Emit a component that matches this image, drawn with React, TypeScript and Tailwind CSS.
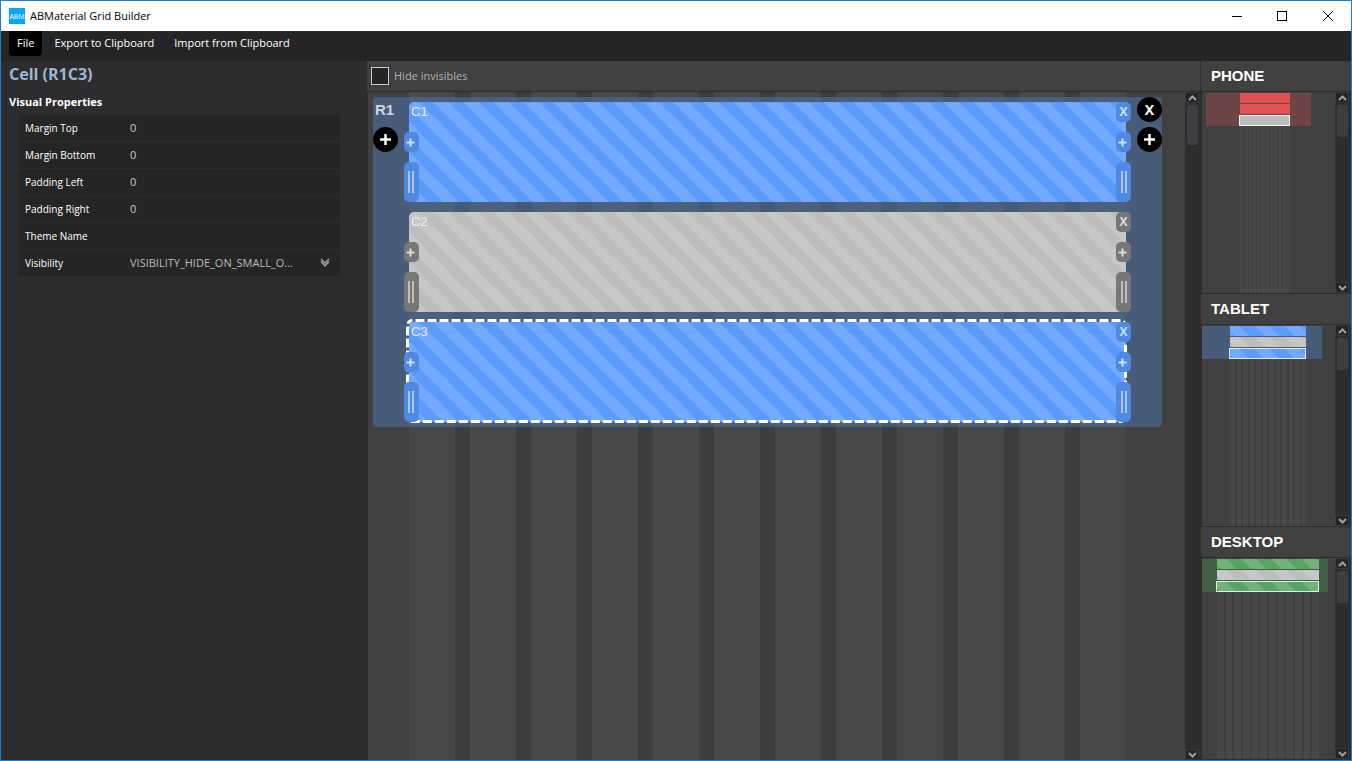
// App.tsx
import React, { useState } from 'react';
import clsx from 'clsx';

type Tone = 'blue' | 'gray';

interface CellData {
  name: string;
  tone: Tone;
  selected?: boolean;
}

const CELLS: CellData[] = [
  { name: 'C1', tone: 'blue' },
  { name: 'C2', tone: 'gray' },
  { name: 'C3', tone: 'blue', selected: true },
];

const PROPERTIES = [
  { id: 'marginTop', label: 'Margin Top', value: '0' },
  { id: 'marginBottom', label: 'Margin Bottom', value: '0' },
  { id: 'paddingLeft', label: 'Padding Left', value: '0' },
  { id: 'paddingRight', label: 'Padding Right', value: '0' },
  { id: 'themeName', label: 'Theme Name', value: '' },
];

const STRIPES =
  'bg-[linear-gradient(45deg,rgba(255,255,255,0.15)_25%,transparent_25%,transparent_50%,rgba(255,255,255,0.15)_50%,rgba(255,255,255,0.15)_75%,transparent_75%)] bg-[length:30px_30px] bg-[position:-5px_0px]';

const ARIAL = "font-['Liberation_Sans',Arial,sans-serif]";

function TitleBar() {
  return (
    <header className="flex h-[30px] shrink-0 items-center bg-white pl-2 text-black">
      <span className="flex size-4 items-center justify-center overflow-hidden bg-[#03a9f4] text-[7px] leading-none text-white">
        ABM
      </span>
      <h1 className="ml-[5px] flex-1 text-[11px]">ABMaterial Grid Builder</h1>
      <button aria-label="Minimize" className="flex h-full w-11 items-center justify-center">
        <svg width="10" height="10" shapeRendering="crispEdges">
          <path d="M0 5.5h10" stroke="#000" />
        </svg>
      </button>
      <button aria-label="Maximize" className="flex h-full w-[46px] items-center justify-center">
        <svg width="10" height="10" shapeRendering="crispEdges">
          <rect x="0.5" y="0.5" width="9" height="9" fill="none" stroke="#000" />
        </svg>
      </button>
      <button aria-label="Close" className="flex h-full w-[46px] items-center justify-center">
        <svg width="10" height="10">
          <path d="M0 0l10 10M10 0L0 10" stroke="#000" />
        </svg>
      </button>
    </header>
  );
}

function MenuBar() {
  return (
    <nav className="flex h-[30px] shrink-0 items-start gap-1 bg-[#252525] pl-2 text-[11px] text-white">
      <button className="h-[25px] rounded-b bg-black px-2">File</button>
      <button className="h-[25px] px-2">Export to Clipboard</button>
      <button className="h-[25px] px-2">Import from Clipboard</button>
    </nav>
  );
}

function PropertiesPanel() {
  const [values, setValues] = useState<Record<string, string>>(
    Object.fromEntries(PROPERTIES.map((p) => [p.id, p.value]))
  );

  return (
    <aside className="w-[366px] shrink-0 bg-[#2d2d30] pl-2">
      <h2 className="pt-[2px] text-[16px] leading-[23px] font-bold text-[#9fb8d0]">Cell (R1C3)</h2>
      <h3 className="mt-[6px] text-[11px] leading-5 font-bold text-white">Visual Properties</h3>
      <form className="mt-[3px] ml-[10px] flex w-[321px] flex-col gap-px text-[10px]">
        {PROPERTIES.map((p) => (
          <div key={p.id} className="flex h-[26px] items-center bg-[#252525] pl-[6px]">
            <label htmlFor={p.id} className="w-[105px] text-white">
              {p.label}
            </label>
            <input
              id={p.id}
              value={values[p.id]}
              onChange={(e) => setValues({ ...values, [p.id]: e.target.value })}
              className="min-w-0 flex-1 bg-transparent text-[11px] text-[#ccc] outline-none"
            />
          </div>
        ))}
        <div className="flex h-[26px] items-center bg-[#252525] pl-[6px]">
          <label htmlFor="visibility" className="w-[105px] text-white">
            Visibility
          </label>
          <select
            id="visibility"
            className="w-[180px] appearance-none bg-transparent text-[11px] text-[#bbb] outline-none"
          >
            <option>VISIBILITY_HIDE_ON_SMALL_O...</option>
          </select>
          <svg width="10" height="10" className="ml-[10px]" fill="none" stroke="#a5a5a5">
            <path d="M1 1l4 4 4-4M1 3.500l4 4.500 4-4.500" strokeWidth="1.4" />
          </svg>
        </div>
      </form>
    </aside>
  );
}

function ScrollArrow({ down }: { down?: boolean }) {
  return (
    <button
      aria-label={down ? 'Scroll down' : 'Scroll up'}
      className="flex h-[11px] w-full items-center justify-center border border-[#3a3a3d] bg-[#252525]"
    >
      <svg width="9" height="6" fill="none" stroke="#a0a0a0" strokeWidth="2">
        <path d={down ? 'M1 1l3.500 3.500L8 1' : 'M1 5l3.500-3.500L8 5'} />
      </svg>
    </button>
  );
}

function ScrollBar({ large }: { large?: boolean }) {
  return (
    <div className="flex w-[15px] shrink-0 flex-col bg-[#2d2d30] pr-px">
      <ScrollArrow />
      <div className="flex-1 pt-[2px] pr-px pl-[2px]">
        <div className={clsx('rounded-[3px] bg-[#3e3e42]', large ? 'h-10' : 'h-8')} />
      </div>
      <ScrollArrow down />
    </div>
  );
}

function Columns({ className }: { className: string }) {
  return (
    <div className={clsx('col-start-1 row-start-1 flex', className)}>
      {Array.from({ length: 12 }, (_, i) => (
        <div key={i} className="flex-1 bg-[#484848]" />
      ))}
    </div>
  );
}

const TONES: Record<Tone, { fill: string; handle: string }> = {
  blue: { fill: 'bg-[#5b9bff]', handle: 'bg-[#4f8ae0] text-[#cfe0fb]' },
  gray: { fill: 'bg-[#bdbdbd]', handle: 'bg-[#777] text-[#ddd]' },
};

function ResizeBars() {
  return (
    <svg width="6" height="22">
      <path d="M1 0v22M5 0v22" stroke="currentColor" strokeWidth="1.4" />
    </svg>
  );
}

function PlusIcon() {
  return (
    <svg width="9" height="9">
      <path d="M0.500 4.500h8M4.500 0.500v8" stroke="currentColor" strokeWidth="2" />
    </svg>
  );
}

function Cell({ cell }: { cell: CellData }) {
  const { fill, handle } = TONES[cell.tone];
  const small = clsx('flex h-5 w-[15px] items-center justify-center rounded-[5px]', handle);
  const tall = clsx('mt-[10px] flex h-10 w-[15px] items-center justify-center rounded-[5px]', handle);

  return (
    <div className={clsx('relative h-[100px] rounded-[5px]', fill, STRIPES)}>
      {cell.selected && (
        <svg className="absolute -top-[3px] -left-[3px] h-[104px] w-[calc(100%+4px)]">
          <rect
            x="1.500"
            y="1.500"
            rx="5"
            className="h-[101px] w-[calc(100%-3px)]"
            fill="none"
            stroke="#fff"
            strokeWidth="3"
            strokeDasharray="9 3"
            strokeDashoffset="-3"
          />
        </svg>
      )}
      <span className={clsx('absolute top-[2px] left-[2px] text-[13px] leading-4 text-[#e6eefa]', ARIAL)}>
        {cell.name}
      </span>
      <div className="absolute top-[30px] -left-[5px]">
        <button aria-label={`Add before ${cell.name}`} className={clsx(small, 'pr-[2px]')}>
          <PlusIcon />
        </button>
        <button aria-label={`Resize start of ${cell.name}`} className={clsx(tall, 'pr-px')}>
          <ResizeBars />
        </button>
      </div>
      <div className="absolute top-0 -right-[5px]">
        <button className={clsx(small, 'mb-[10px] text-[12px] font-bold')}>X</button>
        <button aria-label={`Add after ${cell.name}`} className={clsx(small, 'pr-[2px]')}>
          <PlusIcon />
        </button>
        <button aria-label={`Resize end of ${cell.name}`} className={clsx(tall, 'pl-px')}>
          <ResizeBars />
        </button>
      </div>
    </div>
  );
}

function RoundButton({ label, children }: { label: string; children: React.ReactNode }) {
  return (
    <button
      aria-label={label}
      className="flex size-[25px] items-center justify-center rounded-full bg-black text-[14px] font-bold text-white"
    >
      {children}
    </button>
  );
}

function BigPlus() {
  return (
    <svg width="11" height="11">
      <path d="M0 5.500h11M5.500 0v11" stroke="#fff" strokeWidth="2.500" />
    </svg>
  );
}

function GridEditor() {
  const [hideInvisibles, setHideInvisibles] = useState(false);

  return (
    <main className="flex min-w-0 flex-1 flex-col">
      <div className="flex h-[31px] shrink-0 items-center border-b border-[#2d2d30] bg-[#404040] pl-1">
        <input
          id="hideInvisibles"
          type="checkbox"
          checked={hideInvisibles}
          onChange={(e) => setHideInvisibles(e.target.checked)}
          className="size-[18px] appearance-none border border-[#ccc] bg-[#252525] checked:bg-[#5b9bff]"
        />
        <label htmlFor="hideInvisibles" className="ml-[5px] text-[11px] text-[#b4b4b4]">
          Hide invisibles
        </label>
      </div>
      <div className="flex min-h-0 flex-1">
        <div className="grid flex-1 border-l border-[#2d2d30] bg-[#404040]">
          <Columns className="mr-[59px] ml-[41px] gap-[15px] bg-[#3d3d3d]" />
          <section className="col-start-1 row-start-1 mt-[5px] mr-[23px] ml-[5px] flex self-start rounded bg-[rgba(80,118,176,0.5)]">
            <div className="w-9 shrink-0">
              <h2 className={clsx('h-[30px] pl-[2px] text-[15px] leading-[26px] font-bold text-[#cdd5e0]', ARIAL)}>
                R1
              </h2>
              <RoundButton label="Add row before">
                <BigPlus />
              </RoundButton>
            </div>
            <div className="flex min-w-0 flex-1 flex-col gap-[10px] py-[5px]">
              {CELLS.map((cell) => (
                <Cell key={cell.name} cell={cell} />
              ))}
            </div>
            <div className="flex w-9 shrink-0 flex-col items-end gap-[5px]">
              <RoundButton label="Remove row">X</RoundButton>
              <RoundButton label="Add row after">
                <BigPlus />
              </RoundButton>
            </div>
          </section>
        </div>
        <ScrollBar large />
      </div>
    </main>
  );
}

interface DeviceProps {
  title: string;
  columns: string;
  row: string;
  fill: string;
  plain?: boolean;
}

function DevicePreview({ title, columns, row, fill, plain }: DeviceProps) {
  // the phone preview has its second cell visible and its third one hidden
  const cells = plain
    ? [fill, fill, 'bg-[#bdbdbd]']
    : [clsx(fill, STRIPES), clsx('bg-[#bdbdbd]', STRIPES), clsx(fill, STRIPES)];

  return (
    <section className="flex min-h-0 flex-1 flex-col border-b border-[#2d2d30]">
      <h2
        className={clsx(
          'h-[31px] shrink-0 border-b border-[#2d2d30] bg-[#404040] pl-[10px] text-[15px] leading-[30px] font-bold text-white',
          ARIAL
        )}
      >
        {title}
      </h2>
      <div className="flex min-h-0 flex-1 bg-[#2d2d30] pr-px">
        <div className="grid flex-1 border-l border-[#2d2d30] bg-[#404040]">
          <Columns className={columns} />
          <div
            className={clsx('col-start-1 row-start-1 mt-px grid h-[33px] grid-rows-[10px_10px_11px] gap-px self-start', row)}
          >
            {cells.map((c, i) => (
              <div key={i} className={clsx(c, i === 2 && '-ml-px border border-white/80')} />
            ))}
          </div>
        </div>
        <ScrollBar />
      </div>
    </section>
  );
}

function DevicePanel() {
  return (
    <aside className="flex w-[151px] shrink-0 flex-col border-l border-[#2d2d30]">
      <DevicePreview
        title="PHONE"
        columns="ml-[38px] w-[50px] gap-px bg-[#3f3f3f]"
        row="ml-1 w-[105px] bg-[#6e4545] pr-[21px] pl-[34px]"
        fill="bg-[#e05252]"
        plain
      />
      <DevicePreview
        title="TABLET"
        columns="ml-7 w-[76px] gap-[2px] bg-[#3f3f3f]"
        row="w-[120px] bg-[#485b78] pr-4 pl-7"
        fill="bg-[#5b9bff]"
      />
      <DevicePreview
        title="DESKTOP"
        columns="ml-[15px] w-[102px] gap-[2px] bg-[#3f3f3f]"
        row="w-[126px] bg-[#455e48] pr-[9px] pl-[15px]"
        fill="bg-[#56a463]"
      />
    </aside>
  );
}

export default function App() {
  return (
    <div className="flex h-screen flex-col overflow-hidden border border-[#1b7fd1] bg-[#2d2d30] font-['Open_Sans','Noto_Sans',sans-serif]">
      <TitleBar />
      <MenuBar />
      <div className="flex min-h-0 flex-1">
        <PropertiesPanel />
        <GridEditor />
        <DevicePanel />
      </div>
    </div>
  );
}
